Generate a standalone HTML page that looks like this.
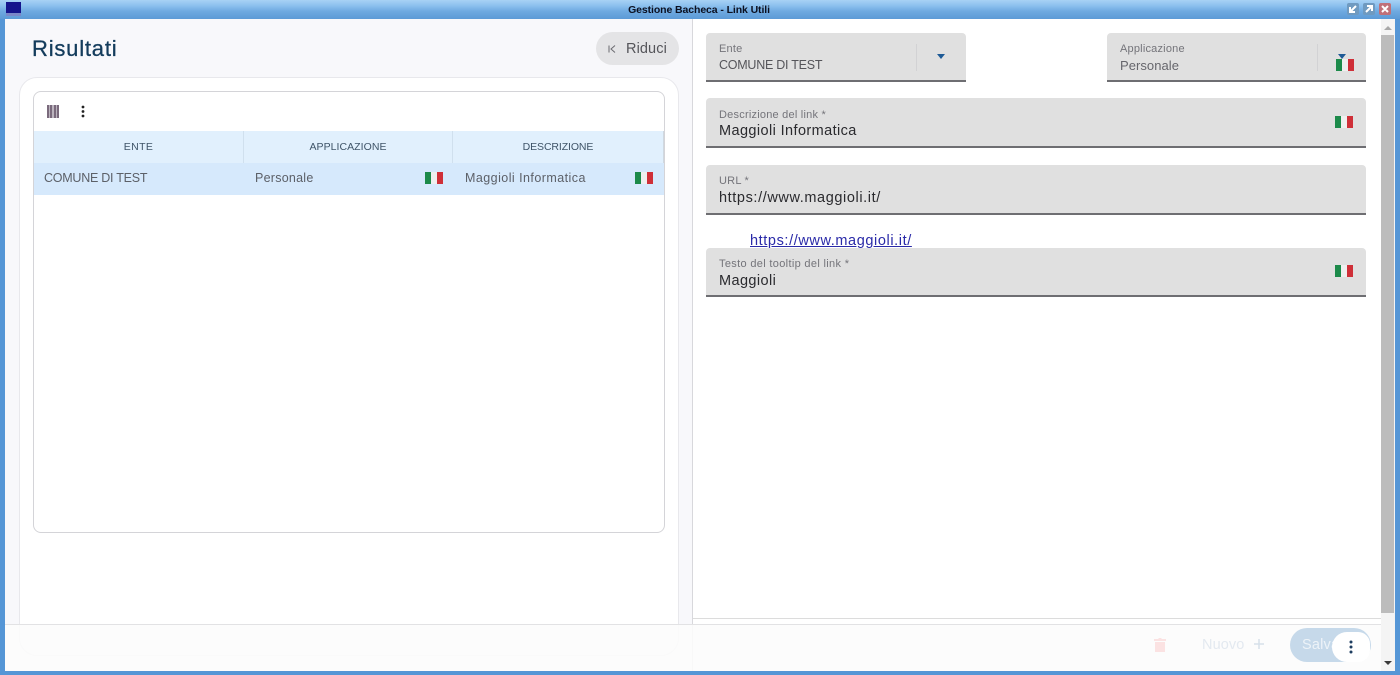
<!DOCTYPE html>
<html><head><meta charset="utf-8"><style>
html,body{margin:0;padding:0;width:1400px;height:675px;overflow:hidden;background:#fff;font-family:"Liberation Sans",sans-serif}
div,span,a{position:absolute;white-space:nowrap}
svg{position:absolute}
.fld{background:#e0e0e0;border-bottom:2px solid #6e6e72;border-radius:4px 4px 0 0;box-sizing:border-box}
.lb{font-size:11px;color:#74747a;letter-spacing:.22px;line-height:13px}
.vl{font-size:14.5px;color:#2a2a2e;letter-spacing:.4px;line-height:17px}
.th{font-size:10.5px;color:#3f5468;letter-spacing:.05px;line-height:13px;top:141px;text-align:center}
.td{font-size:12.5px;color:#5c6068;letter-spacing:.45px;line-height:15px;top:171px}
.flag{width:18px;height:12px;background:linear-gradient(90deg,#1c8a4a 0 33%,#efefef 33% 67%,#cf2f38 67%)}
</style></head><body>
<div style="left:0;top:0;width:1400px;height:19px;background:linear-gradient(#a8d2f5 0,#8cc0ee 30%,#6ea9e0 60%,#5c9ad6 100%)"></div>
<div style="left:0;top:19px;width:5px;height:656px;background:#5596d6"></div>
<div style="left:1395px;top:19px;width:5px;height:656px;background:#5596d6"></div>
<div style="left:0;top:671px;width:1400px;height:4px;background:#5596d6"></div>
<div style="left:6px;top:2px;width:15px;height:14px;background:#14148c"></div>
<div style="left:6px;top:13px;width:15px;height:3px;background:#7a88c8"></div>
<div style="left:0;width:1398px;top:3px;text-align:center;font-size:10.5px;font-weight:bold;color:#0b1020;line-height:14px;letter-spacing:-.1px">Gestione Bacheca - Link Utili</div>
<div style="left:1347px;top:3px;width:12px;height:12px;background:#6f9ac0;border-radius:2px"></div>
<div style="left:1363px;top:3px;width:12px;height:12px;background:#6f9ac0;border-radius:2px"></div>
<div style="left:1379px;top:3px;width:12px;height:12px;background:#c07078;border-radius:2px"></div>
<svg style="left:1347px;top:3px" width="44" height="12" fill="none" stroke="#fff" stroke-width="2"><path d="M9 3L4 8M3 4v5h5M19 9l5-5M20 3h5v5M35 3l6 6M41 3l-6 6"/></svg>

<div style="left:5px;top:19px;width:687px;height:652px;background:#f8f8fb"></div>
<div style="left:692px;top:19px;width:1px;height:652px;background:#d8d8dc"></div>
<div style="left:32px;top:36px;font-size:22px;color:#143c5c;letter-spacing:.8px;line-height:26px;-webkit-text-stroke:.3px #143c5c">Risultati</div>
<div style="left:596px;top:32px;width:83px;height:33px;border-radius:17px;background:#e4e4e6"></div>
<svg style="left:606px;top:43px" width="12" height="12" fill="none" stroke="#6a6a70" stroke-width="1"><path d="M3 2.500v7M9 2.500L5 6l4 3.500"/></svg>
<div style="left:626px;top:41px;font-size:14.5px;color:#55555a;letter-spacing:.1px;line-height:17px">Riduci</div>

<div style="left:19px;top:77px;width:660px;height:579px;box-sizing:border-box;background:#fff;border:1px solid #e8e8ec;border-radius:18px"></div>
<div style="left:33px;top:91px;width:632px;height:442px;box-sizing:border-box;background:#fff;border:1px solid #d4d4d8;border-radius:8px"></div>
<svg style="left:47px;top:105px" width="12" height="13"><path d="M0 0h2.500v13H0zM3 0h2.500v13H3zM6.500 0h2.500v13H6.500zM9.500 0h2.500v13H9.500z" fill="#7a6a7c"/></svg>
<svg style="left:80px;top:105px" width="6" height="13" fill="#222"><circle cx="3" cy="2" r="1.400"/><circle cx="3" cy="6.500" r="1.400"/><circle cx="3" cy="11" r="1.400"/></svg>
<div style="left:34px;top:131px;width:630px;height:32px;background:#e1f0fd"></div>
<div style="left:243px;top:131px;width:1px;height:32px;background:#d0e0ee"></div>
<div style="left:452px;top:131px;width:1px;height:32px;background:#d0e0ee"></div>
<div style="left:663px;top:131px;width:1px;height:32px;background:#cfd8e0"></div>
<div class="th" style="left:34px;width:209px;letter-spacing:.4px">ENTE</div>
<div class="th" style="left:244px;width:208px">APPLICAZIONE</div>
<div class="th" style="left:453px;width:210px;letter-spacing:-.1px">DESCRIZIONE</div>
<div style="left:34px;top:163px;width:630px;height:32px;background:#d6e9fc"></div>
<div class="td" style="left:44px;letter-spacing:-.25px">COMUNE DI TEST</div>
<div class="td" style="left:255px;letter-spacing:.25px">Personale</div>
<div class="td" style="left:465px">Maggioli Informatica</div>
<div class="flag" style="left:425px;top:172px"></div>
<div class="flag" style="left:635px;top:172px"></div>

<div class="fld" style="left:706px;top:33px;width:260px;height:49px"></div>
<div class="lb" style="left:719px;top:43px">Ente</div>
<div class="vl" style="left:719px;top:57px;font-size:12.5px;letter-spacing:-.25px;color:#55555a">COMUNE DI TEST</div>
<div style="left:916px;top:44px;width:1px;height:27px;background:#d2d2d4"></div>
<svg style="left:937px;top:54px" width="8" height="6"><path d="M0 0h8L4 5z" fill="#1e5a96"/></svg>

<div class="fld" style="left:1107px;top:33px;width:259px;height:49px"></div>
<div class="lb" style="left:1120px;top:43px;letter-spacing:.2px">Applicazione</div>
<div class="vl" style="left:1120px;top:57px;font-size:13px;letter-spacing:.05px;color:#66666c">Personale</div>
<div style="left:1317px;top:44px;width:1px;height:27px;background:#d2d2d4"></div>
<div class="flag" style="left:1336px;top:59px;height:12px"></div>
<svg style="left:1338px;top:54px" width="8" height="6"><path d="M0 0h8L4 5z" fill="#1e5a96"/></svg>

<div class="fld" style="left:706px;top:98px;width:660px;height:50px"></div>
<div class="lb" style="left:719px;top:109px">Descrizione del link *</div>
<div class="vl" style="left:719px;top:123px">Maggioli Informatica</div>
<div class="flag" style="left:1335px;top:116px"></div>

<div class="fld" style="left:706px;top:165px;width:660px;height:50px"></div>
<div class="lb" style="left:719px;top:175px">URL *</div>
<div class="vl" style="left:719px;top:190px;letter-spacing:.6px">https://www.maggioli.it/</div>

<a style="left:750px;top:233px;font-size:14.5px;letter-spacing:.6px;line-height:17px;color:#2a2aa8;text-decoration:underline">https://www.maggioli.it/</a>

<div class="fld" style="left:706px;top:248px;width:660px;height:49px"></div>
<div class="lb" style="left:719px;top:258px;letter-spacing:.33px">Testo del tooltip del link *</div>
<div class="vl" style="left:719px;top:273px">Maggioli</div>
<div class="flag" style="left:1335px;top:265px"></div>

<div style="left:693px;top:618px;width:688px;height:1px;background:#dcdcdc"></div>
<div style="left:5px;top:624px;width:1376px;height:47px;background:rgba(252,252,252,.88);border-top:1px solid #e2e2e4;box-sizing:border-box"></div>
<svg style="left:1153px;top:637px" width="14" height="16" fill="#fbe2e2"><path d="M1 2h4l1-1h2l1 1h4v2H1zM2 5h10v10H2z"/></svg>
<div style="left:1202px;top:637px;font-size:14.500px;color:#e3e9f0;letter-spacing:.1px;line-height:17px">Nuovo</div>
<svg style="left:1254px;top:639px" width="10" height="10" stroke="#d6e0ea" stroke-width="1.500"><path d="M5 0v10M0 5h10"/></svg>
<div style="left:1290px;top:628px;width:81px;height:34px;border-radius:17px;background:#c6d9ea"></div>
<div style="left:1302px;top:637px;font-size:14.500px;color:#edf3f8;letter-spacing:.2px;line-height:17px">Salva</div>
<div style="left:1332px;top:632px;width:38px;height:30px;border-radius:19px 15px 15px 19px;background:#fff"></div>
<svg style="left:1348px;top:639px" width="6" height="16" fill="#1e3e60"><circle cx="3" cy="3" r="1.500"/><circle cx="3" cy="8" r="1.500"/><circle cx="3" cy="13" r="1.500"/></svg>

<div style="left:1381px;top:19px;width:14px;height:652px;background:#f4f4f4"></div>
<div style="left:1381px;top:35px;width:13px;height:578px;background:#bcbcbc"></div>
<svg style="left:1383px;top:25px" width="10" height="6"><path d="M1 5h8L5 1z" fill="#a8a8a8"/></svg>
<svg style="left:1383px;top:660px" width="10" height="6"><path d="M1 1h8L5 5z" fill="#3a3a3a"/></svg>
</body></html>
